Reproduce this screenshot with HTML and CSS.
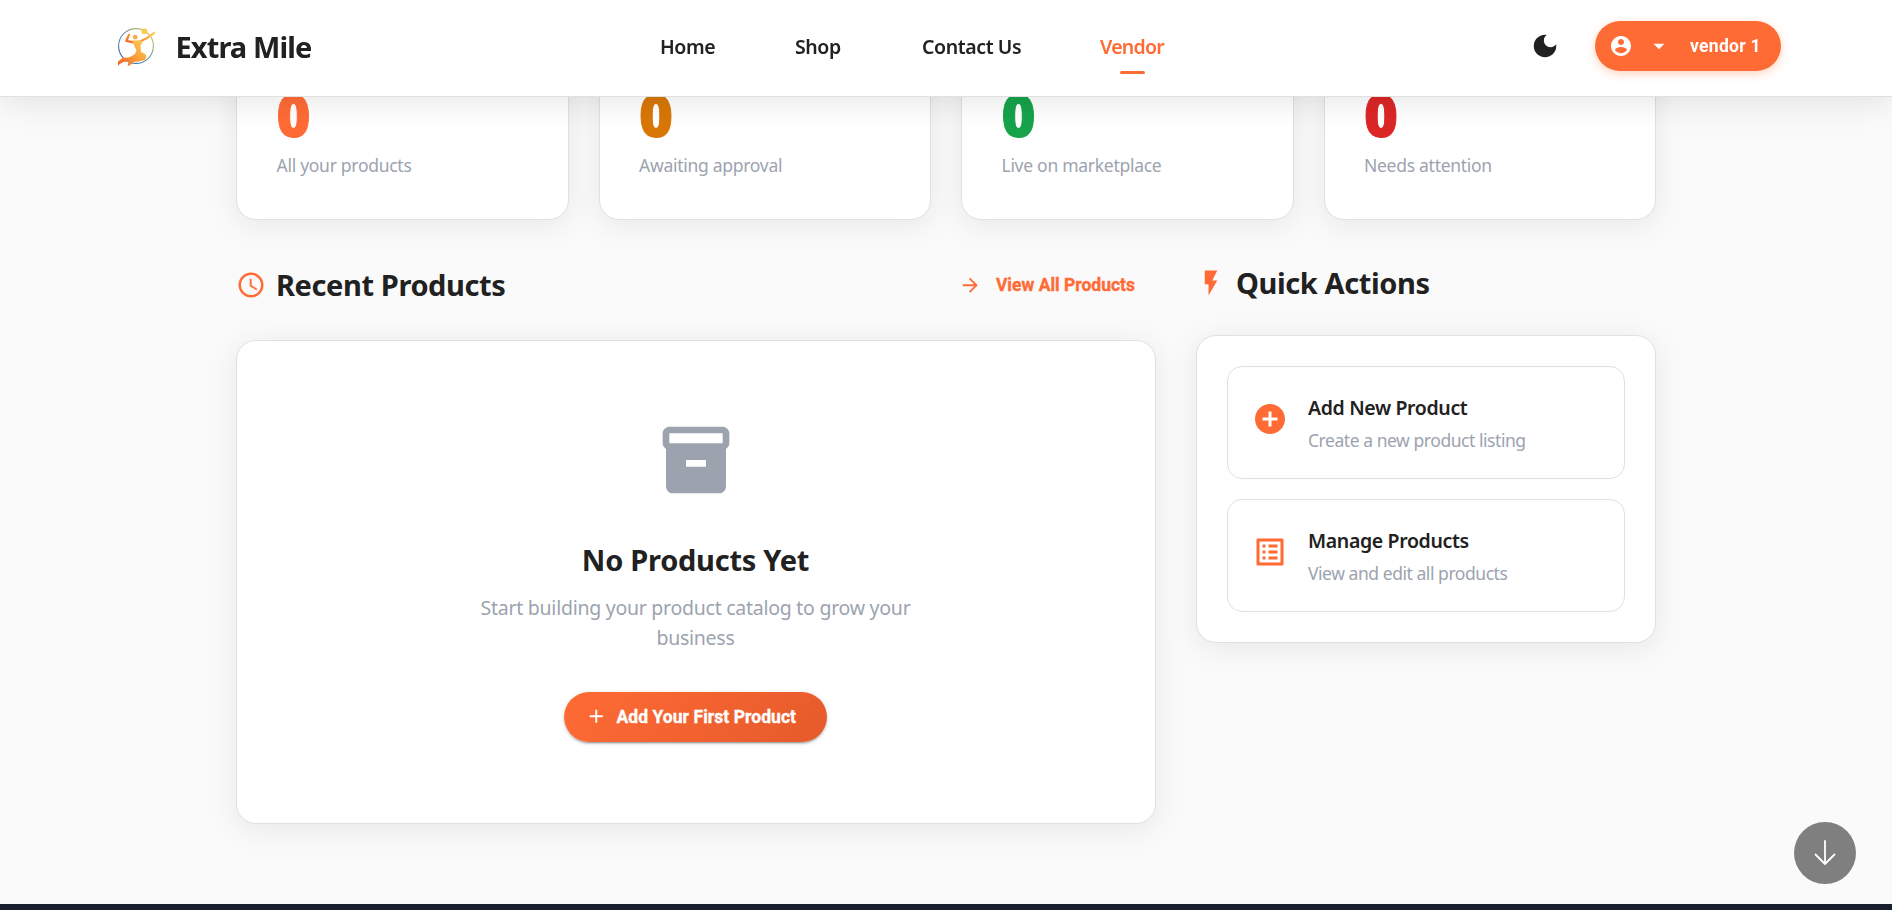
FILE: index.html
```html
<!DOCTYPE html>
<html lang="en">
<head>
<meta charset="utf-8">
<title>Extra Mile</title>
<link rel="stylesheet" href="styles.css">
</head>
<body>
<header class="header">
  <a class="brand">
    <svg class="brand-logo" width="39" height="40" viewBox="0 0 39 40">
      <defs>
        <linearGradient id="ring" x1="0" y1="1" x2="1" y2="0"><stop offset="0" stop-color="#2f62ae"/><stop offset=".5" stop-color="#6d93b0"/><stop offset="1" stop-color="#f0cf45"/></linearGradient>
        <linearGradient id="body" x1="1" y1="0" x2="0" y2="1"><stop offset="0" stop-color="#fcd45c"/><stop offset=".5" stop-color="#f9a03a"/><stop offset="1" stop-color="#f4611e"/></linearGradient>
      </defs>
      <circle cx="19" cy="19" r="17.4" fill="none" stroke="url(#ring)" stroke-width="1.1"/>
      <circle cx="27.4" cy="4.3" r="2.9" fill="#fbcb4b"/>
      <circle cx="18.200" cy="10.200" r="2.400" fill="#fbb04a"/>
      <path fill="none" stroke="url(#body)" stroke-linecap="round" stroke-linejoin="round" stroke-width="2.300" d="M12 7.800L9.400 13.800l7 1.500M23 14.500l7-3.500 7-5"/>
      <path fill="url(#body)" d="M15 13.500l8.500-.3 2.500 1.500-2.500 4 .6 6.300 3.900 1.800 1.600 3-1.600 3.200-6.500 1.500-4.500.3-4.500 3.700-2 .2 1.400-4.200-5.200.6-3.200 1.500-2.500 2.100L1 34.600l4.500-3.600 7-.8 5.500-3.200 1.500-3.400-1.700-3.600z"/>
    </svg>
    <span class="brand-name">Extra Mile</span>
  </a>
  <nav class="nav">
    <a class="nav-link">Home</a>
    <a class="nav-link">Shop</a>
    <a class="nav-link">Contact Us</a>
    <a class="nav-link nav-link-active">Vendor</a>
  </nav>
  <div class="account">
    <svg class="moon" width="30" height="30" viewBox="0 0 24 24"><path d="M12 3c-4.970 0-9 4.030-9 9s4.030 9 9 9 9-4.030 9-9c0-.46-.04-.92-.1-1.360-.98 1.370-2.580 2.260-4.400 2.260-2.980 0-5.400-2.420-5.400-5.400 0-1.810.89-3.420 2.260-4.400-.44-.06-.9-.1-1.360-.1z"/></svg>
    <button class="user-button">
      <svg width="24" height="24" viewBox="0 0 24 24"><path d="M12 2C6.480 2 2 6.480 2 12s4.480 10 10 10 10-4.480 10-10S17.520 2 12 2zm0 3c1.660 0 3 1.340 3 3s-1.340 3-3 3-3-1.340-3-3 1.340-3 3-3zm0 14.200c-2.500 0-4.710-1.280-6-3.220.03-1.990 4-3.080 6-3.080 1.990 0 5.970 1.090 6 3.080-1.290 1.940-3.500 3.220-6 3.220z"/></svg>
      <svg class="caret" width="26" height="26" viewBox="0 0 24 24"><path d="M7 10l5 5 5-5z"/></svg>
      <span class="user-name">vendor 1</span>
    </button>
  </div>
</header>

<main class="page">
  <section class="stats">
    <article class="stat"><div class="stat-value stat-total">0</div><div class="stat-label">All your products</div></article>
    <article class="stat"><div class="stat-value stat-pending">0</div><div class="stat-label">Awaiting approval</div></article>
    <article class="stat"><div class="stat-value stat-live">0</div><div class="stat-label">Live on marketplace</div></article>
    <article class="stat"><div class="stat-value stat-rejected">0</div><div class="stat-label">Needs attention</div></article>
  </section>

  <div class="columns">
    <section>
      <div class="section-head section-head-recent">
        <svg class="accent" width="30" height="30" viewBox="0 0 24 24"><path d="M11.990 2C6.470 2 2 6.480 2 12s4.470 10 9.990 10C17.520 22 22 17.520 22 12S17.520 2 11.990 2zM12 20c-4.420 0-8-3.580-8-8s3.580-8 8-8 8 3.580 8 8-3.580 8-8 8zm.5-13H11v6l5.250 3.150.75-1.230-4.500-2.670z"/></svg>
        <h2 class="title">Recent Products</h2>
        <a class="view-all">
          <svg width="22.5" height="22.5" viewBox="0 0 24 24"><path d="M12 4l-1.410 1.410L16.170 11H4v2h12.170l-5.580 5.590L12 20l8-8z"/></svg>
          <span>View All Products</span>
        </a>
      </div>
      <div class="card empty">
        <svg class="empty-icon" width="80" height="80" viewBox="0 0 24 24"><path d="M20 2H4c-1 0-2 .9-2 2v3.010c0 .72.43 1.340 1 1.690V20c0 1.100 1.100 2 2 2h14c.9 0 2-.9 2-2V8.700c.57-.35 1-.97 1-1.690V4c0-1.100-1-2-2-2zm-5 12H9v-2h6v2zm5-7H4V4h16v3z"/></svg>
        <h3 class="empty-title">No Products Yet</h3>
        <p class="empty-text">Start building your product catalog to grow your business</p>
        <button class="add-button">
          <svg width="22.5" height="22.5" viewBox="0 0 24 24"><path d="M19 13h-6v6h-2v-6H5v-2h6V5h2v6h6z"/></svg>
          <span>Add Your First Product</span>
        </button>
      </div>
    </section>

    <section>
      <div class="section-head section-head-quick">
        <svg class="accent" width="30" height="30" viewBox="0 0 24 24"><path d="M7 2v11h3v9l7-12h-4l4-8z"/></svg>
        <h2 class="title">Quick Actions</h2>
      </div>
      <div class="card actions">
        <a class="action">
          <svg class="accent action-icon" width="36" height="36" viewBox="0 0 24 24"><path d="M12 2C6.480 2 2 6.480 2 12s4.480 10 10 10 10-4.480 10-10S17.520 2 12 2zm5 11h-4v4h-2v-4H7v-2h4V7h2v4h4v2z"/></svg>
          <div>
            <div class="action-title">Add New Product</div>
            <div class="action-text">Create a new product listing</div>
          </div>
        </a>
        <a class="action">
          <svg class="accent action-icon" width="36" height="36" viewBox="0 0 24 24"><path d="M19 5v14H5V5h14m1.100-2H3.900c-.5 0-.9.4-.9.9v16.200c0 .4.4.9.9.9h16.200c.4 0 .9-.5.9-.9V3.900c0-.5-.5-.9-.9-.9zM11 7h6v2h-6V7zm0 4h6v2h-6v-2zm0 4h6v2h-6zM7 7h2v2H7zm0 4h2v2H7zm0 4h2v2H7z"/></svg>
          <div>
            <div class="action-title">Manage Products</div>
            <div class="action-text">View and edit all products</div>
          </div>
        </a>
      </div>
    </section>
  </div>
</main>
<footer class="footer"></footer>

<button class="scroll-down">
  <svg width="22" height="26" viewBox="0 0 22 26"><path d="M11 1v23M1.500 14.500L11 24l9.500-9.500"/></svg>
</button>
</body>
</html>
```
FILE: styles.css
```css
* { box-sizing: border-box; }
body {
  margin: 0;
  height: 910px;
  overflow: hidden;
  background: #fafafa;
  color: #212121;
  font-family: "Noto Sans", "Open Sans", sans-serif;
}
h2, h3, p { margin: 0; }
svg { display: block; flex: none; fill: currentColor; }
button { border: 0; padding: 0; color: #fff; cursor: pointer; }
.accent { color: #ff6b35; }

/* Header */
.header {
  position: fixed;
  inset: 0 0 auto;
  z-index: 2;
  display: flex;
  align-items: center;
  height: 97px;
  padding: 0 111px 2px 117px;
  background: #fff;
  border-bottom: 1px solid #e0e0e0;
  box-shadow: 0 5px 30px rgba(0, 0, 0, .1);
}
.brand { display: flex; align-items: center; gap: 19.500px; width: 543px; padding-bottom: 1px; }
.brand-name { padding-bottom: 1px; font-size: 29px; font-weight: 700; letter-spacing: -.9px; }
.nav { display: grid; grid-template-columns: 55px 47px 98px 65px; column-gap: 80px; }
.nav-link {
  position: relative;
  font-size: 19.500px;
  line-height: 28px;
  font-weight: 600;
  letter-spacing: -.4px;
  white-space: nowrap;
}
.nav-link-active { color: #ff6b35; letter-spacing: -.75px; }
.nav-link-active::after {
  content: "";
  position: absolute;
  left: 50%;
  bottom: -13px;
  width: 25px;
  height: 3px;
  margin-left: -13px;
  border-radius: 2px;
  background: #ff6b35;
}
.account { display: flex; align-items: center; gap: 35px; margin-left: auto; padding-bottom: 2px; }
.user-button {
  display: flex;
  align-items: center;
  width: 186px;
  height: 50px;
  padding-left: 14px;
  border-radius: 25px;
  background: #ff6b35;
  box-shadow: 0 3px 10px rgba(255, 107, 53, .3);
}
.caret { margin-left: 13px; }
.user-name { margin-left: 18px; font: 700 17.500px Roboto, sans-serif; letter-spacing: .3px; }

/* Page */
.page { width: 1420px; height: 904px; margin: 0 auto; }
.stats { display: grid; grid-template-columns: repeat(4, 1fr); gap: 30px; }
.stat, .card {
  background: #fff;
  border: 1px solid #e0e0e0;
  box-shadow: 0 5px 30px rgba(0, 0, 0, .08);
}
.stat { height: 219.500px; padding: 84px 39.500px 0; border-radius: 0 0 20px 20px; }
.stat-value { font-size: 58px; line-height: 60px; font-weight: 900; -webkit-text-stroke: 1px currentColor; }
.stat-total { color: #ff6b35; }
.stat-pending { color: #d97706; }
.stat-live { color: #16a34a; }
.stat-rejected { color: #dc2626; }
.stat-label { margin-top: 8px; font-size: 17.500px; line-height: 24px; letter-spacing: -.28px; color: #9ca3af; }

.columns { display: grid; grid-template-columns: 2fr 1fr; gap: 40px; margin-top: 40px; }
.section-head { display: flex; align-items: center; gap: 10px; margin-bottom: 28px; }
.section-head-recent { height: 52px; padding-bottom: 1px; }
.section-head-quick { height: 47px; padding-bottom: 1px; }
.title, .empty-title { font-size: 29px; font-weight: 700; letter-spacing: -.4px; }
.title { line-height: 40px; }
.view-all {
  display: flex;
  align-items: center;
  gap: 14px;
  margin-left: auto;
  padding-right: 21px;
  color: #ff6b35;
  font: 700 17.500px Roboto, sans-serif;
  -webkit-text-stroke: .35px currentColor;
}
.view-all svg, .add-button svg { -webkit-text-stroke: 0; }
.card { border-radius: 20px; }
.empty {
  display: flex;
  flex-direction: column;
  align-items: center;
  height: 484px;
  padding: 79px 1px 0 0;
}
.empty-icon { color: #9ca3af; }
.empty-title { margin-top: 40px; line-height: 40px; letter-spacing: -.26px; }
.empty-text {
  width: 490px;
  margin-top: 13px;
  font-size: 19.500px;
  line-height: 30px;
  letter-spacing: -.26px;
  text-align: center;
  color: #9ca3af;
}
.add-button {
  display: flex;
  align-items: center;
  gap: 9.500px;
  width: 263px;
  height: 50px;
  margin-top: 39px;
  padding-left: 20.500px;
  border-radius: 25px;
  background: linear-gradient(135deg, #ff6b35, #e55a2b);
  box-shadow: 0 3px 1px -2px rgba(0, 0, 0, .2), 0 2px 2px rgba(0, 0, 0, .14), 0 1px 5px rgba(0, 0, 0, .12);
  font: 700 17.500px Roboto, sans-serif;
  letter-spacing: .05px;
  white-space: nowrap;
  -webkit-text-stroke: .35px currentColor;
}

.actions { display: grid; gap: 20px; padding: 30px; }
.action {
  display: flex;
  gap: 20px;
  height: 113px;
  padding: 26px 24px 0;
  border: 1px solid #e0e0e0;
  border-radius: 15px;
}
.action-icon { margin-top: 8px; }
.action-title { font-size: 19.500px; line-height: 30px; font-weight: 600; letter-spacing: -.36px; }
.action-text { margin-top: 4px; font-size: 17.500px; line-height: 26px; letter-spacing: -.45px; color: #9ca3af; }

.footer { height: 6px; background: #1a1f2e; }
.scroll-down {
  position: fixed;
  left: 1794px;
  top: 822px;
  display: grid;
  place-items: center;
  width: 62px;
  height: 62px;
  border-radius: 50%;
  background: #7f7f7f;
}
.scroll-down path { fill: none; stroke: #fff; stroke-width: 1.800; stroke-linecap: round; stroke-linejoin: round; }
```
